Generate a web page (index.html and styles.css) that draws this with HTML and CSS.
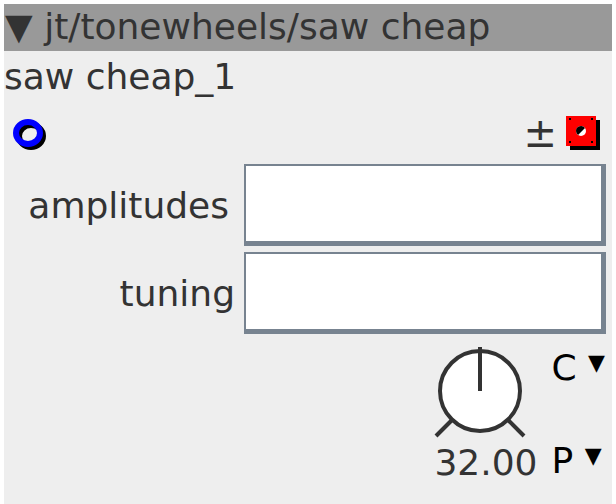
FILE: index.html
```html
<!doctype html>
<html lang="en">
<head>
    <meta charset="UTF-8">
    <title>saw cheap</title>
    <link rel="stylesheet" href="styles.css">
</head>
<body>
    <div class="module">
        <div class="module-head">&#9660; jt/tonewheels/saw cheap</div>
        <div class="module-name">saw cheap_1</div>
        <div class="ports">
            <svg class="ring" width="36" height="34" viewBox="0 0 36 34">
                <ellipse cx="18" cy="18" rx="12" ry="11" fill="none" stroke="#000" stroke-width="6"/>
                <ellipse cx="15" cy="15" rx="12" ry="11" fill="none" stroke="#0000ff" stroke-width="6"/>
            </svg>
            <div class="port-tools">
                <span class="plusminus">&plusmn;</span>
                <svg class="redbox" width="36" height="36" viewBox="0 0 36 36">
                    <rect x="5" y="5" width="30" height="30" fill="#000"/>
                    <rect x="1" y="1" width="30" height="30" fill="#ff0000"/>
                    <path d="M4 4h2M26 4h2M4 27h2M26 27h2" stroke="#000" stroke-width="2"/>
                    <circle cx="16" cy="16" r="5" fill="#fff"/>
                    <path d="M11 16a5 5 0 0 1 9-3l-7 7a5 5 0 0 1-2-4z" fill="#000"/>
                </svg>
            </div>
        </div>
        <div class="fields">
            <label class="field-label">amplitudes</label>
            <div class="field-box"></div>
            <label class="field-label tight">tuning</label>
            <div class="field-box"></div>
        </div>
        <div class="controls">
            <div class="knob-col">
                <svg class="knob" width="92" height="92" viewBox="0 0 92 92">
                    <circle cx="46" cy="44" r="40" fill="#fff" stroke="#333" stroke-width="4"/>
                    <line x1="46" y1="0" x2="46" y2="44" stroke="#333" stroke-width="4"/>
                    <line x1="2" y1="89" x2="18" y2="73" stroke="#333" stroke-width="4"/>
                    <line x1="90" y1="89" x2="74" y2="73" stroke="#333" stroke-width="4"/>
                </svg>
                <div class="knob-value">32.00</div>
            </div>
            <div class="selects">
                <div class="select">C <span class="arrow">&#9660;</span></div>
                <div class="select">P <span class="arrow">&#9660;</span></div>
            </div>
        </div>
    </div>
</body>
</html>
```

FILE: styles.css
```css
*{
    margin: 0;
    padding: 0;
    box-sizing: border-box;
}
body{
    background: #fff;
    font-family: "DejaVu Sans", sans-serif;
    color: #333;
    padding: 4px 4px 0 4px;
}
.module{
    width: 608px;
    height: 500px;
    background: #eee;
}
.module-head{
    background: #999;
    height: 47px;
    font-size: 36px;
    line-height: 46px;
    padding-left: 1px;
    white-space: nowrap;
}
.module-name{
    font-size: 36px;
    line-height: 52px;
}
.ports{
    display: flex;
    justify-content: space-between;
    align-items: center;
    height: 60px;
    padding: 0 11px 0 9px;
}
.ring{
    display: block;
    margin-top: 4px;
}
.port-tools{
    display: flex;
    align-items: center;
    gap: 8px;
}
.plusminus{
    font-size: 40px;
    line-height: 40px;
    color: #333;
}
.redbox{
    display: block;
}
.fields{
    display: grid;
    grid-template-columns: 240px 362px;
    row-gap: 6px;
    padding-top: 1px;
}
.field-label{
    font-size: 36px;
    text-align: right;
    align-self: center;
    padding-right: 15px;
}
.field-label.tight{
    padding-right: 9px;
}
.field-box{
    height: 82px;
    background: #fff;
    border-style: solid;
    border-color: #778390;
    border-width: 2px 5px 5px 2px;
}
.controls{
    display: flex;
    justify-content: flex-end;
    gap: 14px;
    padding: 13px 7px 0 0;
}
.knob-col{
    display: flex;
    flex-direction: column;
    align-items: flex-start;
}
.knob{
    display: block;
    margin-left: 0;
}
.knob-value{
    font-size: 36px;
    line-height: 40px;
    margin-top: 4px;
}
.selects{
    display: flex;
    flex-direction: column;
    justify-content: space-between;
    margin-top: -3px;
    padding-bottom: 3px;
}
.select{
    font-size: 36px;
    line-height: 38px;
    color: #000;
}
.select .arrow{
    font-size: 22px;
    vertical-align: 10px;
}
```
